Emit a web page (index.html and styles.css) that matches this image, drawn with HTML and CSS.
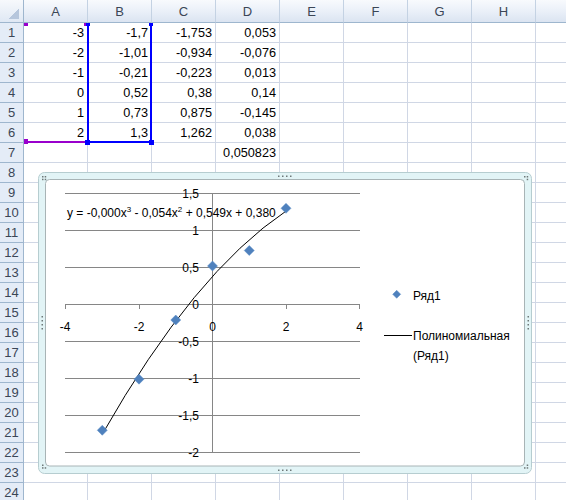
FILE: index.html
```html
<!DOCTYPE html>
<html>
<head>
<meta charset="utf-8">
<link rel="stylesheet" href="styles.css">
</head>
<body>
<div class="sheet">
  <div class="grid">
    <div class="corner"></div><div class="ch">A</div><div class="ch">B</div><div class="ch">C</div><div class="ch">D</div><div class="ch">E</div><div class="ch">F</div><div class="ch">G</div><div class="ch">H</div><div class="ch"></div>
    <div class="rh">1</div><div class="c">-3</div><div class="c">-1,7</div><div class="c">-1,753</div><div class="c">0,053</div><div class="c"></div><div class="c"></div><div class="c"></div><div class="c"></div><div class="c"></div>
    <div class="rh">2</div><div class="c">-2</div><div class="c">-1,01</div><div class="c">-0,934</div><div class="c">-0,076</div><div class="c"></div><div class="c"></div><div class="c"></div><div class="c"></div><div class="c"></div>
    <div class="rh">3</div><div class="c">-1</div><div class="c">-0,21</div><div class="c">-0,223</div><div class="c">0,013</div><div class="c"></div><div class="c"></div><div class="c"></div><div class="c"></div><div class="c"></div>
    <div class="rh">4</div><div class="c">0</div><div class="c">0,52</div><div class="c">0,38</div><div class="c">0,14</div><div class="c"></div><div class="c"></div><div class="c"></div><div class="c"></div><div class="c"></div>
    <div class="rh">5</div><div class="c">1</div><div class="c">0,73</div><div class="c">0,875</div><div class="c">-0,145</div><div class="c"></div><div class="c"></div><div class="c"></div><div class="c"></div><div class="c"></div>
    <div class="rh">6</div><div class="c">2</div><div class="c">1,3</div><div class="c">1,262</div><div class="c">0,038</div><div class="c"></div><div class="c"></div><div class="c"></div><div class="c"></div><div class="c"></div>
    <div class="rh">7</div><div class="c"></div><div class="c"></div><div class="c"></div><div class="c">0,050823</div><div class="c"></div><div class="c"></div><div class="c"></div><div class="c"></div><div class="c"></div>
    <div class="rh">8</div><div class="c"></div><div class="c"></div><div class="c"></div><div class="c"></div><div class="c"></div><div class="c"></div><div class="c"></div><div class="c"></div><div class="c"></div>
    <div class="rh">9</div><div class="c"></div><div class="c"></div><div class="c"></div><div class="c"></div><div class="c"></div><div class="c"></div><div class="c"></div><div class="c"></div><div class="c"></div>
    <div class="rh">10</div><div class="c"></div><div class="c"></div><div class="c"></div><div class="c"></div><div class="c"></div><div class="c"></div><div class="c"></div><div class="c"></div><div class="c"></div>
    <div class="rh">11</div><div class="c"></div><div class="c"></div><div class="c"></div><div class="c"></div><div class="c"></div><div class="c"></div><div class="c"></div><div class="c"></div><div class="c"></div>
    <div class="rh">12</div><div class="c"></div><div class="c"></div><div class="c"></div><div class="c"></div><div class="c"></div><div class="c"></div><div class="c"></div><div class="c"></div><div class="c"></div>
    <div class="rh">13</div><div class="c"></div><div class="c"></div><div class="c"></div><div class="c"></div><div class="c"></div><div class="c"></div><div class="c"></div><div class="c"></div><div class="c"></div>
    <div class="rh">14</div><div class="c"></div><div class="c"></div><div class="c"></div><div class="c"></div><div class="c"></div><div class="c"></div><div class="c"></div><div class="c"></div><div class="c"></div>
    <div class="rh">15</div><div class="c"></div><div class="c"></div><div class="c"></div><div class="c"></div><div class="c"></div><div class="c"></div><div class="c"></div><div class="c"></div><div class="c"></div>
    <div class="rh">16</div><div class="c"></div><div class="c"></div><div class="c"></div><div class="c"></div><div class="c"></div><div class="c"></div><div class="c"></div><div class="c"></div><div class="c"></div>
    <div class="rh">17</div><div class="c"></div><div class="c"></div><div class="c"></div><div class="c"></div><div class="c"></div><div class="c"></div><div class="c"></div><div class="c"></div><div class="c"></div>
    <div class="rh">18</div><div class="c"></div><div class="c"></div><div class="c"></div><div class="c"></div><div class="c"></div><div class="c"></div><div class="c"></div><div class="c"></div><div class="c"></div>
    <div class="rh">19</div><div class="c"></div><div class="c"></div><div class="c"></div><div class="c"></div><div class="c"></div><div class="c"></div><div class="c"></div><div class="c"></div><div class="c"></div>
    <div class="rh">20</div><div class="c"></div><div class="c"></div><div class="c"></div><div class="c"></div><div class="c"></div><div class="c"></div><div class="c"></div><div class="c"></div><div class="c"></div>
    <div class="rh">21</div><div class="c"></div><div class="c"></div><div class="c"></div><div class="c"></div><div class="c"></div><div class="c"></div><div class="c"></div><div class="c"></div><div class="c"></div>
    <div class="rh">22</div><div class="c"></div><div class="c"></div><div class="c"></div><div class="c"></div><div class="c"></div><div class="c"></div><div class="c"></div><div class="c"></div><div class="c"></div>
    <div class="rh">23</div><div class="c"></div><div class="c"></div><div class="c"></div><div class="c"></div><div class="c"></div><div class="c"></div><div class="c"></div><div class="c"></div><div class="c"></div>
    <div class="rh">24</div><div class="c"></div><div class="c"></div><div class="c"></div><div class="c"></div><div class="c"></div><div class="c"></div><div class="c"></div><div class="c"></div><div class="c"></div>
  </div>

  <div class="range-x"></div>
  <div class="range-y"></div>
  <div class="mk mk-p mk-p1"></div>
  <div class="mk mk-p mk-p2"></div>
  <div class="mk mk-p mk-p3"></div>
  <div class="mk mk-b mk-b1"></div>
  <div class="mk mk-b mk-b2"></div>
  <div class="mk mk-b mk-b3"></div>
  <div class="mk mk-b mk-b4"></div>

  <svg class="chart" width="494" height="302" viewBox="38 172 494 302" xmlns="http://www.w3.org/2000/svg">
    <rect class="frame-out" x="38.5" y="172.5" width="493" height="301" rx="6"/>
    <rect class="frame-in" x="45.5" y="179.5" width="479" height="286.5" rx="4"/>

    <g class="handles">
      <rect x="42" y="176" width="1.5" height="1.5"/><rect x="44.7" y="176" width="1.5" height="1.5"/><rect x="42" y="178.7" width="1.5" height="1.5"/><rect x="44.7" y="178.7" width="1.5" height="1.5"/>
      <rect x="524" y="176" width="1.5" height="1.5"/><rect x="526.7" y="176" width="1.5" height="1.5"/><rect x="526.7" y="178.7" width="1.5" height="1.5"/>
      <rect x="42" y="464.5" width="1.5" height="1.5"/><rect x="42" y="467.2" width="1.5" height="1.5"/><rect x="44.7" y="467.2" width="1.5" height="1.5"/>
      <rect x="526.7" y="464.5" width="1.5" height="1.5"/><rect x="524" y="467.2" width="1.5" height="1.5"/><rect x="526.7" y="467.2" width="1.5" height="1.5"/>
      <rect x="278" y="175.5" width="1.5" height="1.5"/><rect x="282" y="175.5" width="1.5" height="1.5"/><rect x="286" y="175.5" width="1.5" height="1.5"/><rect x="290" y="175.5" width="1.5" height="1.5"/>
      <rect x="278" y="469.5" width="1.5" height="1.5"/><rect x="282" y="469.5" width="1.5" height="1.5"/><rect x="286" y="469.5" width="1.5" height="1.5"/><rect x="290" y="469.5" width="1.5" height="1.5"/>
      <rect x="41.5" y="316" width="1.5" height="1.5"/><rect x="41.5" y="320" width="1.5" height="1.5"/><rect x="41.5" y="324" width="1.5" height="1.5"/><rect x="41.5" y="328" width="1.5" height="1.5"/>
      <rect x="527.5" y="316" width="1.5" height="1.5"/><rect x="527.5" y="320" width="1.5" height="1.5"/><rect x="527.5" y="324" width="1.5" height="1.5"/><rect x="527.5" y="328" width="1.5" height="1.5"/>
    </g>

    <g class="grid-lines">
      <line x1="65" y1="193.5" x2="360" y2="193.5"/>
      <line x1="65" y1="230.5" x2="360" y2="230.5"/>
      <line x1="65" y1="267.5" x2="360" y2="267.5"/>
      <line x1="65" y1="341.5" x2="360" y2="341.5"/>
      <line x1="65" y1="378.5" x2="360" y2="378.5"/>
      <line x1="65" y1="415.5" x2="360" y2="415.5"/>
      <line x1="65" y1="452.5" x2="360" y2="452.5"/>
      <line x1="65" y1="304.5" x2="360" y2="304.5"/>
      <line x1="212.5" y1="193" x2="212.5" y2="453"/>
      <line x1="65.5" y1="304.5" x2="65.5" y2="309"/>
      <line x1="139.5" y1="304.5" x2="139.5" y2="309"/>
      <line x1="212.5" y1="304.5" x2="212.5" y2="309"/>
      <line x1="286.5" y1="304.5" x2="286.5" y2="309"/>
      <line x1="359.5" y1="304.5" x2="359.5" y2="309"/>
    </g>

    <g class="ylab">
      <text x="199" y="197.5">1,5</text>
      <text x="199" y="234.5">1</text>
      <text x="199" y="271.5">0,5</text>
      <text x="199" y="308.5">0</text>
      <text x="199" y="345.5">-0,5</text>
      <text x="199" y="382.5">-1</text>
      <text x="199" y="419.5">-1,5</text>
      <text x="199" y="456.5">-2</text>
    </g>
    <g class="xlab">
      <text x="65" y="330.5">-4</text>
      <text x="139" y="330.5">-2</text>
      <text x="212.5" y="330.5">0</text>
      <text x="286" y="330.5">2</text>
      <text x="359.5" y="330.5">4</text>
    </g>

    <path class="trend" d="M102.25 434.22 Q194.13 272.72 286 211.11"/>

    <g class="pts">
      <path d="M102.25 425.3 L107.25 430.3 L102.25 435.3 L97.25 430.3 Z"/>
      <path d="M139 374.2 L144 379.2 L139 384.2 L134 379.2 Z"/>
      <path d="M175.75 315 L180.75 320 L175.75 325 L170.75 320 Z"/>
      <path d="M212.5 261 L217.5 266 L212.5 271 L207.5 266 Z"/>
      <path d="M249.25 245.5 L254.25 250.5 L249.25 255.5 L244.25 250.5 Z"/>
      <path d="M286 203.3 L291 208.3 L286 213.3 L281 208.3 Z"/>
    </g>

    <text class="eq" x="67" y="217">y = -0,000x<tspan class="sup" dy="-5">3</tspan><tspan dy="5"> - 0,054x</tspan><tspan class="sup" dy="-5">2</tspan><tspan dy="5"> + 0,549x + 0,380</tspan></text>

    <path class="pts-l" d="M396.7 290.3 L400.7 294.3 L396.7 298.3 L392.7 294.3 Z"/>
    <text class="leg" x="413" y="299.5">Ряд1</text>
    <line class="leg-line" x1="384" y1="335.5" x2="412" y2="335.5"/>
    <text class="leg" x="413" y="340">Полиномиальная</text>
    <text class="leg" x="413" y="359.5">(Ряд1)</text>
  </svg>
</div>
</body>
</html>
```

FILE: styles.css
```css
html, body {
  margin: 0;
  padding: 0;
  background: #ffffff;
}

.sheet {
  position: relative;
  width: 566px;
  height: 500px;
  overflow: hidden;
  font-family: "Liberation Sans", Arial, sans-serif;
  font-size: 12.7px;
  color: #000;
}

.grid {
  display: grid;
  grid-template-columns: 24px repeat(9, 64px);
  grid-template-rows: 23px repeat(24, 20px);
}

.grid > div {
  box-sizing: border-box;
}

.corner {
  border-right: 1px solid #9eb6ce;
  border-bottom: 1px solid #9eb6ce;
  background:
    linear-gradient(to bottom right, transparent 50%, #b6c6dc 50%) no-repeat right 4px bottom 3px / 10px 11px,
    linear-gradient(#f7f9fc, #dfe8f4);
}

.ch {
  display: flex;
  align-items: center;
  justify-content: center;
  background: linear-gradient(#f8fafd, #e9eff8 55%, #dbe4f1);
  border-right: 1px solid #c4d2e3;
  border-bottom: 1px solid #9eb6ce;
  color: #3b4656;
  font-size: 13px;
}

.rh {
  display: flex;
  align-items: center;
  justify-content: center;
  background: #e4ecf7;
  border-right: 1px solid #9eb6ce;
  border-bottom: 1px solid #9eb6ce;
  color: #3b4656;
  font-size: 13px;
}

.c {
  display: flex;
  align-items: flex-end;
  justify-content: flex-end;
  padding: 0 3px 1px 0;
  line-height: 15px;
  border-right: 1px solid #d0d7e5;
  border-bottom: 1px solid #d0d7e5;
  white-space: nowrap;
}

/* chart data-range highlights */
.range-y {
  position: absolute;
  left: 87px;
  top: 23px;
  width: 65px;
  height: 120px;
  box-sizing: border-box;
  border: 2px solid #0000ff;
  border-top: none;
}

.range-x {
  position: absolute;
  left: 24px;
  top: 141px;
  width: 64px;
  height: 2px;
  background: #9900cc;
}

.mk {
  position: absolute;
  width: 4px;
  height: 4px;
}
.mk-p { background: #9900cc; }
.mk-b { background: #0000ff; }
.mk-p1 { left: 24px; top: 23px; height: 3px; }
.mk-p2 { left: 84px; top: 23px; height: 3px; width: 3px; }
.mk-p3 { left: 24px; top: 139px; height: 5px; }
.mk-b1 { left: 86px; top: 23px; height: 3px; }
.mk-b2 { left: 149px; top: 23px; height: 3px; }
.mk-b3 { left: 85px; top: 140px; width: 5px; height: 5px; }
.mk-b4 { left: 149px; top: 140px; width: 5px; height: 5px; }

/* chart */
.chart {
  position: absolute;
  left: 38px;
  top: 172px;
}

.frame-out {
  fill: #e2f4f6;
  stroke: #b6cdd0;
  stroke-width: 1;
}

.frame-in {
  fill: #ffffff;
  stroke: #a8b4b6;
  stroke-width: 1;
}

.handles rect {
  fill: #6e7878;
}

.grid-lines line {
  stroke: #868686;
  stroke-width: 1;
}

.chart text {
  font-family: "Liberation Sans", Arial, sans-serif;
  font-size: 12px;
  fill: #000;
}

.ylab text {
  text-anchor: end;
}

.xlab text {
  text-anchor: middle;
}

.chart .sup {
  font-size: 8px;
}

.trend {
  fill: none;
  stroke: #000;
  stroke-width: 1;
}

.pts path,
.pts-l {
  fill: #4f81bd;
  stroke: #5b8cc6;
  stroke-width: 0.5;
}

.leg-line {
  stroke: #000;
  stroke-width: 1;
}
```
